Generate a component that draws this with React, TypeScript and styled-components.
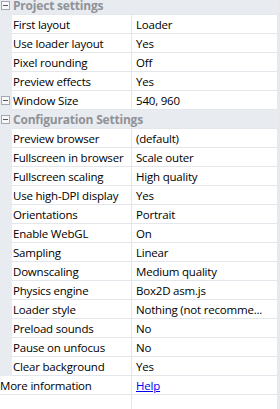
import styled, { createGlobalStyle } from 'styled-components';

const GlobalStyle = createGlobalStyle`
  html, body {
    margin: 0;
    padding: 0;
    background: #ffffff;
    overflow: hidden;
  }
  body {
    font-family: 'Open Sans', 'Noto Sans', sans-serif;
    font-size: 11.5px;
    letter-spacing: -0.2px;
    color: #000000;
  }
`;

const Page = styled.div`
  display: flex;
  width: 280px;
  height: 409px;
  overflow: hidden;
`;

const Grid = styled.div`
  flex: 1;
  display: flex;
  flex-direction: column;
  margin-top: -4px;
`;

const Strip = styled.div`
  width: 3px;
  background: #e8e9eb;
`;

const Row = styled.div<{ $header?: boolean; $flat?: boolean }>`
  display: grid;
  grid-template-columns: ${(p) => (p.$flat ? '132px 1fr' : '12px 120px 1fr')};
  height: 19px;
  box-sizing: border-box;
  border-bottom: 1px solid #e3e6ea;
  background: ${(p) => (p.$header ? '#e8ebef' : '#ffffff')};
  flex-shrink: 0;
`;

const Gutter = styled.div`
  background: #e8ebef;
  display: flex;
  align-items: center;
  justify-content: flex-start;
  padding-left: 1px;
  margin-bottom: -1px;
`;

const Toggle = styled.span`
  position: relative;
  width: 7px;
  height: 7px;
  border: 1px solid #a4a9b0;
  background: #f7f8fa;
  &::after {
    content: '';
    position: absolute;
    left: 1px;
    top: 3px;
    width: 5px;
    height: 1px;
    background: #55595f;
  }
`;

const Label = styled.div<{ $shift?: number }>`
  display: flex;
  align-items: center;
  padding-left: ${(p) => p.$shift ?? 1}px;
  border-right: 1px solid #e3e6ea;
  white-space: nowrap;
  overflow: hidden;
`;

const HeaderTitle = styled.div`
  grid-column: 2 / 4;
  display: flex;
  align-items: center;
  padding-left: 1px;
  font-weight: 700;
  font-size: 12px;
  color: #909297;
  white-space: nowrap;
`;

const Value = styled.div`
  display: flex;
  align-items: center;
  padding-left: 4px;
  white-space: nowrap;
  overflow: hidden;
`;

const Link = styled.a`
  color: #0000ee;
  text-decoration: underline;
`;

type Item = { label: string; value: string; toggle?: boolean };

const project: Item[] = [
  { label: 'First layout', value: 'Loader' },
  { label: 'Use loader layout', value: 'Yes' },
  { label: 'Pixel rounding', value: 'Off' },
  { label: 'Preview effects', value: 'Yes' },
  { label: 'Window Size', value: '540, 960', toggle: true },
];

const config: Item[] = [
  { label: 'Preview browser', value: '(default)' },
  { label: 'Fullscreen in browser', value: 'Scale outer' },
  { label: 'Fullscreen scaling', value: 'High quality' },
  { label: 'Use high-DPI display', value: 'Yes' },
  { label: 'Orientations', value: 'Portrait' },
  { label: 'Enable WebGL', value: 'On' },
  { label: 'Sampling', value: 'Linear' },
  { label: 'Downscaling', value: 'Medium quality' },
  { label: 'Physics engine', value: 'Box2D asm.js' },
  { label: 'Loader style', value: 'Nothing (not recomme...' },
  { label: 'Preload sounds', value: 'No' },
  { label: 'Pause on unfocus', value: 'No' },
  { label: 'Clear background', value: 'Yes' },
];

function Header({ title }: { title: string }) {
  return (
    <Row $header>
      <Gutter>
        <Toggle />
      </Gutter>
      <HeaderTitle>{title}</HeaderTitle>
    </Row>
  );
}

function PropRow({ item }: { item: Item }) {
  return (
    <Row>
      <Gutter>{item.toggle && <Toggle />}</Gutter>
      <Label>{item.label}</Label>
      <Value>{item.value}</Value>
    </Row>
  );
}

export default function App() {
  return (
    <>
      <GlobalStyle />
      <Page>
        <Grid>
          <Header title="Project settings" />
          {project.map((item) => (
            <PropRow key={item.label} item={item} />
          ))}
          <Header title="Configuration Settings" />
          {config.map((item) => (
            <PropRow key={item.label} item={item} />
          ))}
          <Row $flat>
            <Label $shift={-2}>More information</Label>
            <Value>
              <Link href="#">Help</Link>
            </Value>
          </Row>
          <Row $flat>
            <Label />
            <Value />
          </Row>
        </Grid>
        <Strip />
      </Page>
    </>
  );
}
